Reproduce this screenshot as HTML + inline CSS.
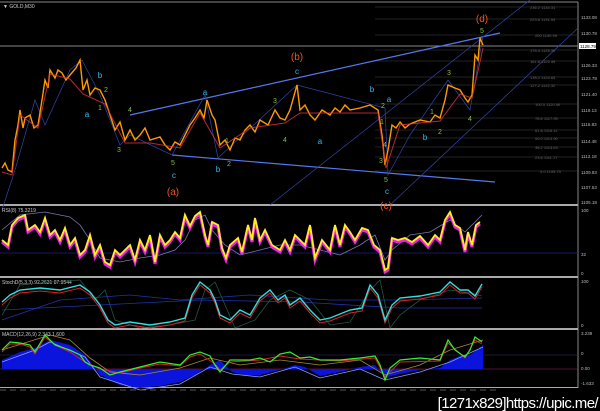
<!DOCTYPE html>
<html><head><meta charset="utf-8"><style>
html,body{margin:0;padding:0;background:#000;width:600px;height:411px;overflow:hidden}
svg{display:block}
text{font-family:"Liberation Sans",sans-serif}
</style></head><body>
<svg width="600" height="411" viewBox="0 0 600 411" xmlns="http://www.w3.org/2000/svg">
<rect width="600" height="411" fill="#000"/>
<line x1="0" y1="2" x2="578" y2="2" stroke="#888" stroke-width="1"/>
<line x1="578" y1="2" x2="578" y2="388" stroke="#888"/>
<line x1="0" y1="46" x2="578" y2="46" stroke="#888"/>
<g fill="#aaa">
<rect x="0" y="204" width="578" height="2"/><rect x="0" y="276" width="578" height="2"/>
<rect x="0" y="328" width="578" height="2"/><rect x="0" y="387" width="578" height="1"/>
</g>
<text x="3" y="8" fill="#ccc" font-size="5">▼ GOLD,M30</text>
<g stroke="#444" stroke-width="0.6">
<line x1="375" y1="7" x2="578" y2="7"/><line x1="375" y1="19" x2="578" y2="19"/>
<line x1="375" y1="35" x2="578" y2="35"/><line x1="375" y1="50" x2="578" y2="50"/>
<line x1="375" y1="61" x2="578" y2="61"/><line x1="375" y1="77" x2="578" y2="77"/>
<line x1="375" y1="85" x2="578" y2="85"/><line x1="375" y1="104" x2="578" y2="104"/>
<line x1="375" y1="118" x2="578" y2="118"/><line x1="375" y1="130" x2="578" y2="130"/>
<line x1="375" y1="138" x2="578" y2="138"/><line x1="375" y1="147" x2="578" y2="147"/>
<line x1="375" y1="157" x2="578" y2="157"/><line x1="375" y1="171" x2="578" y2="171"/>
</g>
<g fill="#666" font-size="4"><text x="530" y="9">236.2 1134.31</text><text x="530" y="21">223.6 1131.93</text><text x="535" y="37">200 1130.39</text><text x="530" y="52">176.4 1128.35</text><text x="530" y="63">161.8 1125.49</text><text x="530" y="79">138.2 1124.65</text><text x="530" y="87">127.2 1122.32</text><text x="535" y="106">100.0 1120.96</text><text x="535" y="120">78.6 1117.95</text><text x="535" y="132">61.8 1116.11</text><text x="535" y="140">50.0 1114.90</text><text x="535" y="149">38.2 1113.63</text><text x="535" y="159">23.6 1111.17</text><text x="540" y="173">0.0 1109.75</text></g>
<g fill="#bbb" font-size="4.5">
<text x="581" y="19">1133.08</text><text x="581" y="35">1130.78</text><text x="581" y="67">1126.33</text><text x="581" y="80">1123.78</text><text x="581" y="96">1121.40</text><text x="581" y="112">1119.13</text><text x="581" y="126">1116.83</text><text x="581" y="143">1114.48</text><text x="581" y="158">1112.18</text><text x="581" y="174">1109.83</text><text x="581" y="189">1107.53</text><text x="581" y="204">1105.18</text>
<text x="581" y="212">100</text><text x="581" y="256">32</text><text x="581" y="275">0</text><text x="581" y="283">100</text><text x="581" y="327">0</text><text x="581" y="335">3.239</text><text x="581" y="355">0</text><text x="581" y="370">0.00</text><text x="581" y="385">-1.633</text>
</g>
<rect x="579" y="43" width="17" height="6" fill="#fff"/><text x="580" y="48" font-size="4.5" fill="#000">1128.79</text>
<g stroke="#5577ee" stroke-width="1.2" fill="none">
<line x1="130" y1="115" x2="500" y2="33"/>
<line x1="172" y1="155" x2="495" y2="182"/>
</g>
<g stroke="#3344aa" stroke-width="0.7" fill="none">
<line x1="270" y1="205" x2="530" y2="0"/><line x1="390" y1="205" x2="578" y2="28"/>
<polyline points="2,210 15,170 35,100 45,125 70,70 82,60 100,95 120,145 130,135 172,155 205,95 218,158 297,85 385,108 388,175 410,135 448,80 470,110 483,36"/>
</g>
<polyline fill="none" stroke="#ff9900" stroke-width="1.4" points="2,168 5,163 8,170 12,172 15,140 18,125 20,110 23,128 25,118 30,115 34,128 38,125 42,100 45,80 48,88 50,70 55,78 58,70 62,73 66,80 70,75 76,68 80,60 83,90 87,80 90,95 95,88 100,90 105,100 110,115 115,130 120,122 125,140 130,130 135,140 140,135 145,128 150,140 160,137 165,145 170,150 175,142 180,145 185,135 190,125 195,118 200,110 204,118 207,100 212,115 215,120 220,145 225,140 230,150 235,138 240,140 245,130 250,125 255,132 260,120 268,125 275,110 280,118 285,120 290,110 297,85 300,110 305,105 310,115 315,120 322,110 330,115 335,108 340,112 345,105 350,110 360,108 370,105 378,110 382,135 385,165 388,150 392,125 396,128 400,122 405,128 410,124 420,120 430,122 435,115 440,118 445,100 448,85 455,88 460,90 465,98 468,102 472,95 475,55 478,60 480,38 483,45"/>
<polyline fill="none" stroke="#dd3344" stroke-width="1" opacity="0.8" points="2,172 12,175 20,115 38,128 50,74 70,79 83,94 105,104 125,143 150,143 180,148 200,113 220,148 250,128 285,123 300,113 350,113 378,113 386,168 400,125 440,121 460,94 472,98 483,48"/>
<g font-size="10" text-anchor="middle">
<text x="173" y="195" fill="#ee5522">(a)</text><text x="297" y="60" fill="#ee5522">(b)</text><text x="482" y="22" fill="#ee5522">(d)</text><text x="386" y="209" fill="#ee5522">(c)</text>
</g>
<g font-size="8" fill="#33bbee" text-anchor="middle">
<text x="100" y="78">b</text><text x="87" y="117">a</text><text x="174" y="178">c</text><text x="205" y="95">a</text><text x="218" y="172">b</text><text x="297" y="74">c</text><text x="320" y="144">a</text><text x="372" y="92">b</text><text x="389" y="102">a</text><text x="425" y="140">b</text><text x="387" y="194">c</text>
</g>
<g font-size="7" fill="#88bb44" text-anchor="middle">
<text x="106" y="92">2</text><text x="100" y="110">1</text><text x="130" y="112">4</text><text x="119" y="152">3</text><text x="173" y="165">5</text><text x="227" y="143">1</text><text x="229" y="166">2</text><text x="275" y="103">3</text><text x="285" y="142">4</text><text x="382" y="124">1</text><text x="383" y="108">2</text><text x="381" y="163">3</text><text x="385" y="147">4</text><text x="386" y="182">5</text><text x="432" y="114">1</text><text x="440" y="134">2</text><text x="449" y="75">3</text><text x="470" y="121">4</text><text x="482" y="33">5</text>
</g>
<line x1="0" y1="253" x2="578" y2="253" stroke="#222288" stroke-width="0.7"/>
<text x="2" y="212" font-size="5" fill="#ccc">RSI(8) 75.3219</text>
<polyline fill="none" stroke="#7777aa" stroke-width="0.8" points="2,230 20,215 45,212 60,215 70,217 80,225 90,240 100,258 120,262 140,258 160,255 175,250 185,240 195,220 205,215 212,230 225,245 240,255 260,250 280,245 300,245 320,250 340,255 360,245 375,235 385,260 392,250 410,235 430,232 450,220 465,232 482,215"/>
<polyline fill="none" stroke="#ee22ee" stroke-width="3" points="2,242 8,247 12,227 18,220 25,217 28,232 35,227 40,234 45,220 50,237 55,232 60,242 65,230 70,247 75,240 80,257 85,252 90,237 95,257 100,247 105,264 110,267 115,252 120,257 130,247 135,262 140,242 145,252 150,237 155,264 160,237 165,247 170,242 175,234 180,240 185,217 190,228 195,218 200,214 205,237 208,247 212,224 218,227 222,250 226,260 230,247 238,240 242,254 248,227 252,242 255,220 260,242 265,232 272,247 280,252 285,242 290,252 295,237 300,242 305,247 310,227 315,260 322,242 330,252 335,227 340,247 345,227 350,234 355,242 362,230 368,232 374,247 380,252 385,272 388,270 392,240 398,242 405,240 412,244 420,238 428,247 435,237 440,242 445,222 450,214 455,227 460,230 465,252 468,234 472,247 476,227 480,224"/>
<polyline fill="none" stroke="#ffee22" stroke-width="1.8" points="2,240 8,245 12,225 18,218 25,215 28,230 35,225 40,232 45,218 50,235 55,230 60,240 65,228 70,245 75,238 80,255 85,250 90,235 95,255 100,245 105,262 110,265 115,250 120,255 130,245 135,260 140,240 145,250 150,235 155,262 160,235 165,245 170,240 175,232 180,238 185,215 190,226 195,216 200,212 205,235 208,245 212,222 218,225 222,248 226,258 230,245 238,238 242,252 248,225 252,240 255,218 260,240 265,230 272,245 280,250 285,240 290,250 295,235 300,240 305,245 310,225 315,258 322,240 330,250 335,225 340,245 345,225 350,232 355,240 362,228 368,230 374,245 380,250 385,270 388,268 392,238 398,240 405,238 412,242 420,236 428,245 435,235 440,240 445,220 450,212 455,225 460,228 465,250 468,232 472,245 476,225 480,222"/>
<polyline fill="none" stroke="#2233aa" stroke-width="0.8" points="2,310 100,305 200,300 300,302 400,308 482,308"/>
<polyline fill="none" stroke="#2233aa" stroke-width="0.8" points="2,320 60,300 130,295 180,300 250,295 330,300 400,300 482,298"/>
<text x="2" y="284" font-size="5" fill="#ccc">StochD(5,3,3) 92.2631 87.9544</text>
<polyline fill="none" stroke="#225544" stroke-width="0.8" points="2,315 20,285 50,282 80,280 95,300 105,290 115,320 140,328 170,325 195,320 205,290 215,282 225,305 235,328 255,320 270,300 290,290 310,300 330,325 350,322 370,290 380,280 390,328 400,315 420,300 450,290 470,293 482,296"/>
<polyline fill="none" stroke="#dd2222" stroke-width="1" points="2,305 10,298 20,293 40,291 60,293 80,288 90,295 100,308 108,323 115,328 130,325 150,328 170,325 185,321 192,298 200,285 210,293 215,303 220,318 230,323 240,313 250,318 260,301 270,293 278,303 285,298 290,308 300,301 310,313 320,323 330,321 350,313 362,311 370,288 378,298 385,323 392,308 400,301 420,299 440,295 450,285 460,293 468,293 475,299 482,287"/>
<polyline fill="none" stroke="#33dddd" stroke-width="1.4" points="2,302 10,295 20,290 40,288 60,290 80,285 90,292 100,305 108,320 115,325 130,322 150,325 170,322 185,318 192,295 200,282 210,290 215,300 220,315 230,320 240,310 250,315 260,298 270,290 278,300 285,295 290,305 300,298 310,310 320,320 330,318 350,310 362,308 370,285 378,295 385,320 392,305 400,298 420,296 440,292 450,282 460,290 468,290 475,296 482,284"/>
<line x1="0" y1="369" x2="578" y2="369" stroke="#aa2266" stroke-width="0.6"/>
<line x1="0" y1="355" x2="578" y2="355" stroke="#333366" stroke-width="0.6"/>
<polygon fill="#0a14dd" points="2,369 2,360 20,352 35,348 50,340 70,345 85,355 100,375 120,385 140,388 160,386 180,382 195,375 210,365 220,360 232,372 245,375 260,375 280,370 295,365 305,367 320,376 340,372 360,367 375,365 385,378 395,375 420,370 440,368 450,360 460,356 470,355 483,345 483,369"/>
<polyline fill="none" stroke="#8899ff" stroke-width="0.8" points="2,362 35,350 50,342 85,357 100,377 140,390 180,384 210,367 232,374 260,377 295,367 320,378 360,369 385,380 420,372 450,362 483,347"/>
<polyline fill="none" stroke="#aa8833" stroke-width="0.8" points="2,350 50,335 70,340 90,358 110,372 140,375 180,368 210,358 240,365 280,360 320,365 360,360 385,375 420,365 450,350 483,340"/>
<text x="2" y="336" font-size="5" fill="#ccc">MACD(12,26,9) 2.343 1.600</text>
<polyline fill="none" stroke="#dd2222" stroke-width="1" points="2,352 10,344 20,344 30,347 35,354 45,337 55,345 70,352 85,362 100,369 120,373 140,368 160,364 180,366 190,357 200,354 215,364 220,370 230,362 260,360 280,356 300,359 340,361 375,358 385,377 400,362 440,361 448,343 465,358 475,340 482,344"/>
<polyline fill="none" stroke="#33ee33" stroke-width="1.2" points="2,350 10,342 20,343 30,345 35,352 45,335 50,340 55,345 70,350 80,355 85,362 90,365 100,368 110,375 120,372 140,367 160,362 180,365 190,355 200,352 210,356 215,365 220,372 230,360 250,360 260,358 270,362 280,354 290,352 300,358 310,357 320,360 340,360 360,358 375,356 380,365 385,380 390,368 400,360 420,358 440,360 448,340 455,350 465,357 470,350 475,337 482,342"/>
<line x1="0" y1="390" x2="500" y2="390" stroke="#555" stroke-width="1" stroke-dasharray="6,4"/>
<text x="598" y="408" font-size="15" fill="#fff" text-anchor="end" font-family="Liberation Mono, monospace" letter-spacing="-0.6">[1271x829]https://upic.me/</text>
</svg>
</body></html>
